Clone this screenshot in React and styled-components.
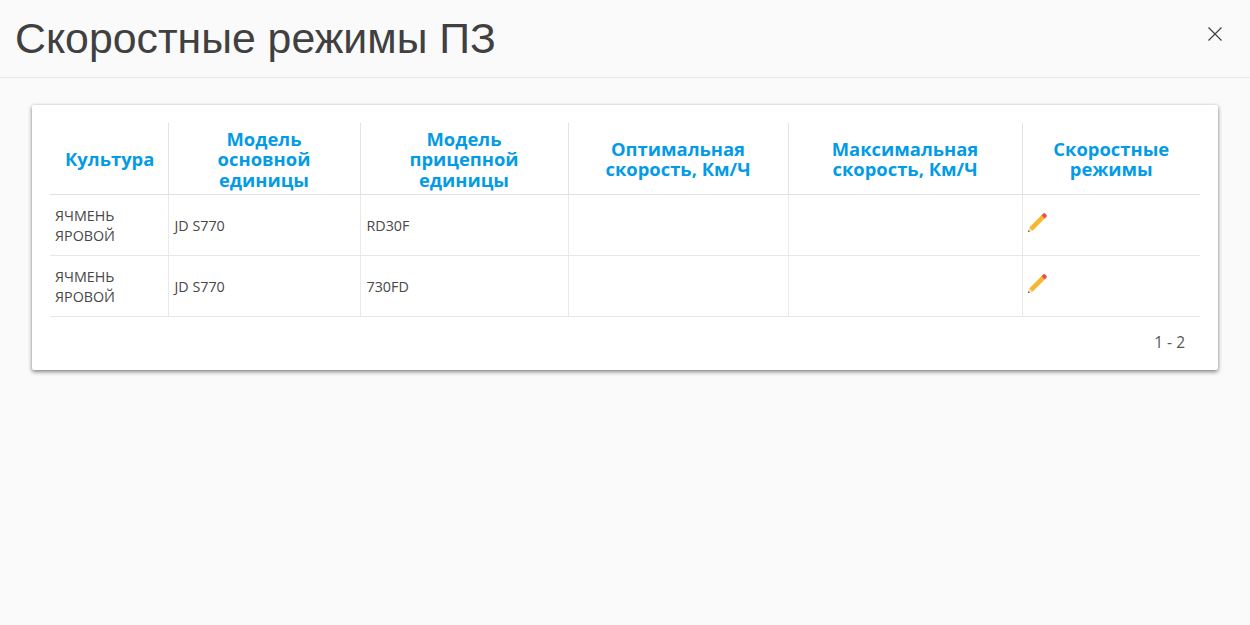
import React from "react";
import styled, { createGlobalStyle } from "styled-components";

const Global = createGlobalStyle`
  html, body { margin: 0; padding: 0; background: #fafafa; }
  body { font-family: "Open Sans", "Liberation Sans", sans-serif; color: #404040; }
`;

const Page = styled.div`
  width: 1250px;
  height: 625px;
  background: #fafafa;
  overflow: hidden;
`;
const Header = styled.header`
  height: 77px;
  border-bottom: 1px solid #e9e9e9;
  display: flex;
  align-items: center;
  justify-content: space-between;
  padding: 0 27px 0 15px;
`;
const Title = styled.h1`
  margin: 0;
  font: 400 42.8px/1 "Liberation Sans", Arial, sans-serif;
  color: #404040;
`;
const CloseButton = styled.button`
  width: 16px;
  height: 16px;
  padding: 0;
  border: 0;
  background: none;
  display: flex;
  margin-top: -10px;
`;
const Content = styled.main`
  padding: 27px 32px 0;
`;
const Card = styled.section`
  background: #fff;
  border-radius: 2px;
  box-shadow: 0 2px 4px rgba(0,0,0,.45), 0 0 3px rgba(0,0,0,.12);
  padding: 18px 18px 0;
  height: 265px;
  box-sizing: border-box;
`;
const Table = styled.table`
  width: 1150px;
  table-layout: fixed;
  border-collapse: collapse;
`;
const HeadCell = styled.th`
  height: 71px;
  padding: 2px 5px 0;
  box-sizing: border-box;
  font: 700 18.4px/20.5px "Open Sans", sans-serif;
  color: #039be5;
  text-align: ${p => p.$align || "center"};
  padding-left: ${p => p.$pl || "5px"};
  border-right: 1px solid #e4e4e4;
  border-bottom: 1px solid #e0e0e0;
  &:last-child { border-right: 0; }
`;
const Cell = styled.td`
  height: 61px;
  padding: 2px 6px 0 ${p => p.$pl || "6px"};
  box-sizing: border-box;
  font: 400 14.3px/20px "Open Sans", sans-serif;
  color: #484848;
  border-right: 1px solid #e9e9e9;
  border-bottom: 1px solid #e6e6e6;
  vertical-align: middle;
  &:last-child { border-right: 0; }
`;
const IconCell = styled(Cell)`
  padding: 0 0 4px 4px;
`;
const Pager = styled.div`
  text-align: right;
  padding: 15px 15px 0 0;
  font: 400 15.5px/20px "Open Sans", sans-serif;
  color: #555;
`;
const PencilSvg = styled.svg`
  display: block;
  width: 21px;
  height: 21px;
`;

const Pencil = () => (
  <PencilSvg viewBox="0 0 22 22">
    <path d="M2.2 16.4 L5.6 19.8 L1 21 Z" fill="#f3d9a4" />
    <path d="M1.5 19 L3 20.5 L1 21 Z" fill="#37474f" />
    <path d="M2.4 16.2 L15.4 3.2 L18.8 6.6 L5.8 19.6 Z" fill="#f9b52d" />
    <path d="M15.2 3.4 L17 1.6 Q18 .7 19.1 1.6 L20.4 2.9 Q21.3 4 20.4 5 L18.6 6.8 Z" fill="#e8504a" />
  </PencilSvg>
);

const columns = [
  { title: <>Культура</>, width: 118, align: "left", pl: "15px" },
  { title: <>Модель<br />основной<br />единицы</>, width: 192 },
  { title: <>Модель<br />прицепной<br />единицы</>, width: 208 },
  { title: <>Оптимальная<br />скорость, Км/Ч</>, width: 220 },
  { title: <>Максимальная<br />скорость, Км/Ч</>, width: 234 },
  { title: <>Скоростные<br />режимы</>, width: 178 },
];
const rows = [
  { crop: "ЯЧМЕНЬ ЯРОВОЙ", unit: "JD S770", trailer: "RD30F" },
  { crop: "ЯЧМЕНЬ ЯРОВОЙ", unit: "JD S770", trailer: "730FD" },
];

export default function App() {
  return (
    <Page>
      <Global />
      <Header>
        <Title>Скоростные режимы ПЗ</Title>
        <CloseButton aria-label="Закрыть">
          <svg width="16" height="16" viewBox="0 0 16 16">
            <path d="M1.5 1.5 L14.5 14.5 M14.5 1.5 L1.5 14.5" stroke="#404040" strokeWidth="1.2" fill="none" />
          </svg>
        </CloseButton>
      </Header>
      <Content>
        <Card>
          <Table>
            <colgroup>
              {columns.map((c, i) => <col key={i} style={{ width: c.width }} />)}
            </colgroup>
            <thead>
              <tr>
                {columns.map((c, i) => (
                  <HeadCell key={i} $align={c.align} $pl={c.pl}>{c.title}</HeadCell>
                ))}
              </tr>
            </thead>
            <tbody>
              {rows.map((r, i) => (
                <tr key={i}>
                  <Cell $pl="5px">{r.crop}</Cell>
                  <Cell>{r.unit}</Cell>
                  <Cell>{r.trailer}</Cell>
                  <Cell />
                  <Cell />
                  <IconCell><Pencil /></IconCell>
                </tr>
              ))}
            </tbody>
          </Table>
          <Pager>1 - 2</Pager>
        </Card>
      </Content>
    </Page>
  );
}
